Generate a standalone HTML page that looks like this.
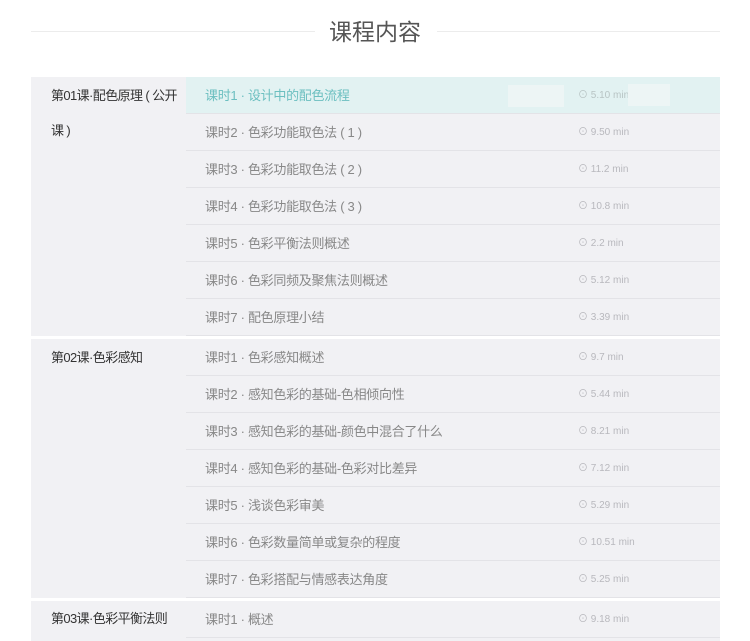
<!DOCTYPE html>
<html><head><meta charset="utf-8"><style>
*{margin:0;padding:0;box-sizing:border-box}
body{width:750px;height:632px;background:#fff;font-family:"Liberation Sans","Noto Sans CJK SC",sans-serif;overflow:hidden;position:relative}
.hl{position:absolute;top:31px;height:1px;background:#ececec}
h1{position:absolute;top:16px;left:0;width:750px;text-align:center;font-size:23px;font-weight:normal;color:#555;line-height:32px}
.sec{position:absolute;left:31px;width:689px;background:#f1f1f4;display:flex}
.lt{width:155px;padding:1px 0 0 20px;font-size:13px;color:#333;line-height:35px;letter-spacing:-0.6px;white-space:nowrap}
.rows{flex:1}
.row{height:37px;border-bottom:1px solid #e3e3e7;position:relative;font-size:13px;color:#888;line-height:38px;padding-left:19px;letter-spacing:-0.3px}
.row .d{position:absolute;left:392px;top:0;font-size:10px;color:#b8b8bd;letter-spacing:0}
.row.on{background:#e2f2f2;color:#6cbfc0}
.row.on .d{color:#b8c4c4}
</style></head><body>
<div class="hl" style="left:31px;width:284px"></div>
<div class="hl" style="left:437px;width:283px"></div>
<h1>课程内容</h1>
<div class="sec" style="top:77px;height:259px">
<div class="lt">第01课·配色原理 ( 公开<br>课 )</div>
<div class="rows">
<div class="row on">课时1 · 设计中的配色流程<span style="position:absolute;left:322px;top:8px;width:56px;height:22px;background:#edf5f5"></span><span class="d">⊙ 5.10 min</span><span style="position:absolute;left:442px;top:7px;width:42px;height:22px;background:#edf5f5"></span></div>
<div class="row">课时2 · 色彩功能取色法 ( 1 )<span class="d">⊙ 9.50 min</span></div>
<div class="row">课时3 · 色彩功能取色法 ( 2 )<span class="d">⊙ 11.2 min</span></div>
<div class="row">课时4 · 色彩功能取色法 ( 3 )<span class="d">⊙ 10.8 min</span></div>
<div class="row">课时5 · 色彩平衡法则概述<span class="d">⊙ 2.2 min</span></div>
<div class="row">课时6 · 色彩同频及聚焦法则概述<span class="d">⊙ 5.12 min</span></div>
<div class="row">课时7 · 配色原理小结<span class="d">⊙ 3.39 min</span></div>
</div></div>
<div class="sec" style="top:339px;height:259px">
<div class="lt">第02课·色彩感知</div>
<div class="rows">
<div class="row">课时1 · 色彩感知概述<span class="d">⊙ 9.7 min</span></div>
<div class="row">课时2 · 感知色彩的基础-色相倾向性<span class="d">⊙ 5.44 min</span></div>
<div class="row">课时3 · 感知色彩的基础-颜色中混合了什么<span class="d">⊙ 8.21 min</span></div>
<div class="row">课时4 · 感知色彩的基础-色彩对比差异<span class="d">⊙ 7.12 min</span></div>
<div class="row">课时5 · 浅谈色彩审美<span class="d">⊙ 5.29 min</span></div>
<div class="row">课时6 · 色彩数量简单或复杂的程度<span class="d">⊙ 10.51 min</span></div>
<div class="row">课时7 · 色彩搭配与情感表达角度<span class="d">⊙ 5.25 min</span></div>
</div></div>
<div class="sec" style="top:601px;height:40px">
<div class="lt" style="padding-top:0">第03课·色彩平衡法则</div>
<div class="rows">
<div class="row">课时1 · 概述<span class="d">⊙ 9.18 min</span></div>
</div></div>
</body></html>
